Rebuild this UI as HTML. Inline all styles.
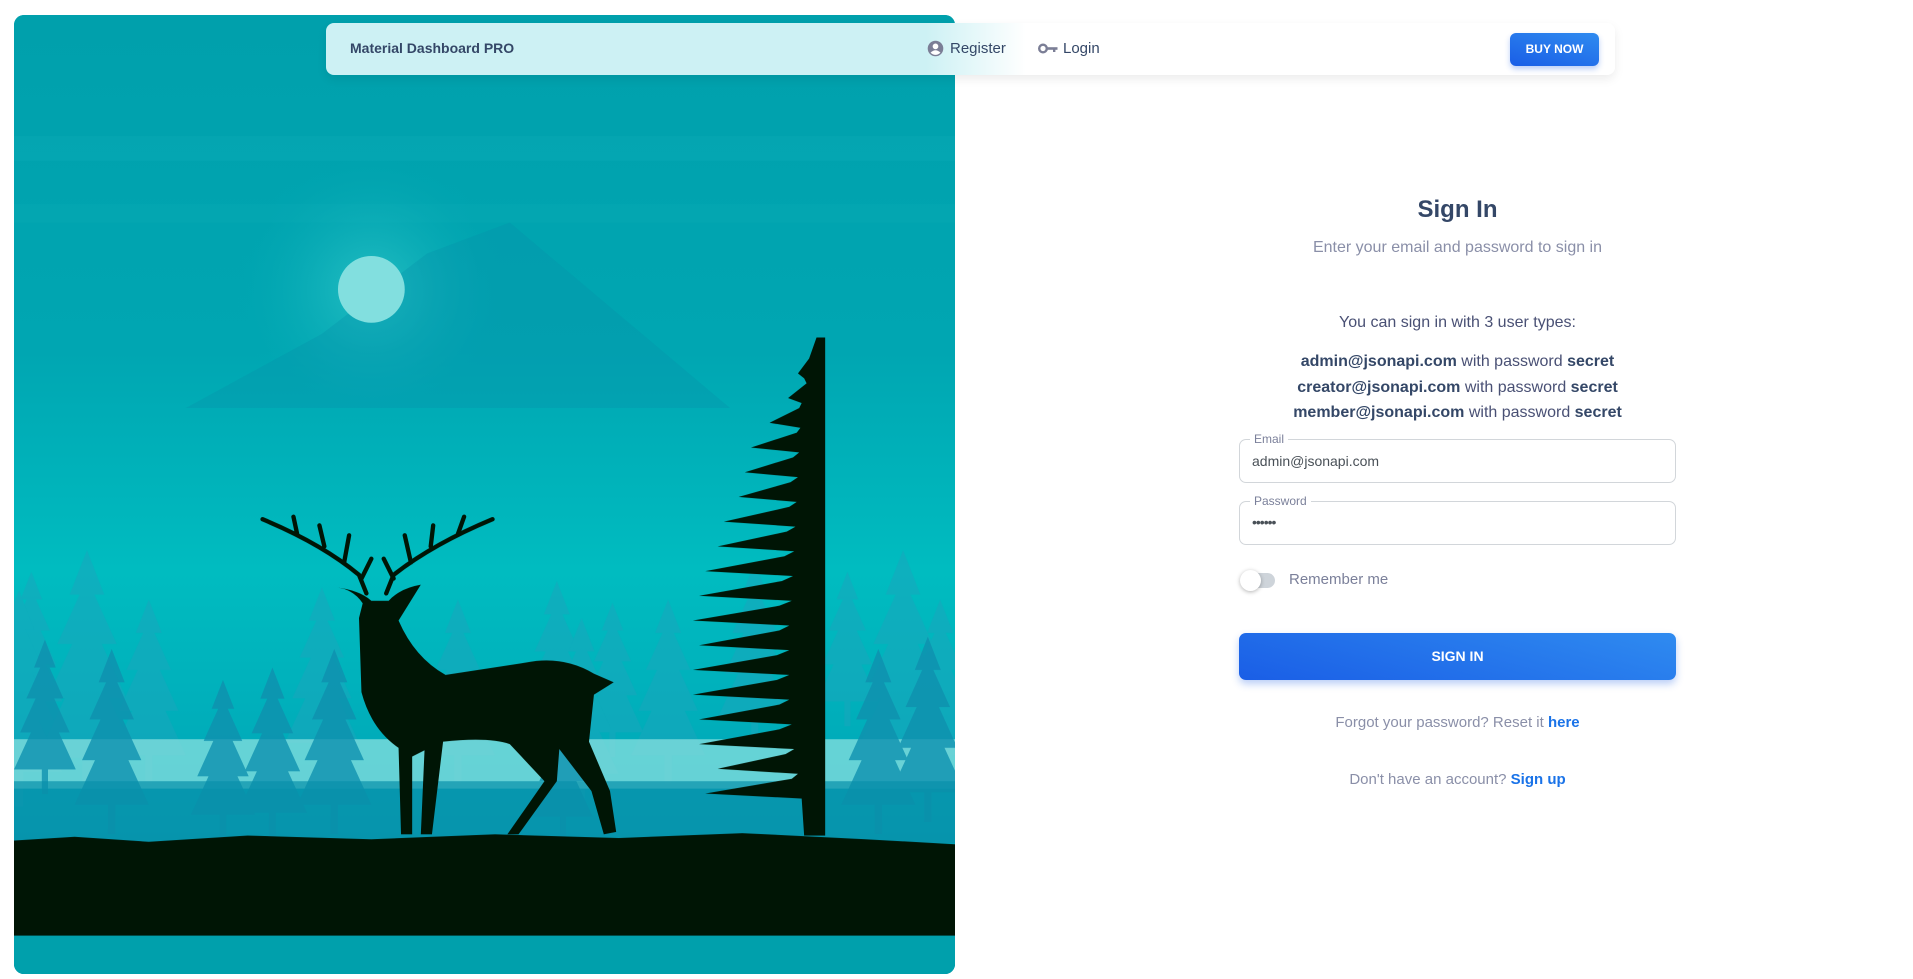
<!DOCTYPE html>
<html><head><meta charset="utf-8"><style>
*{margin:0;padding:0;box-sizing:border-box}
body{width:1913px;height:979px;background:#fff;font-family:"Liberation Sans",Roboto,sans-serif;position:relative;overflow:hidden;color:#344767}
.card{position:absolute;left:14px;top:15px;width:941px;height:959px;border-radius:10px;overflow:hidden;background:#00a0ac}
.nav{position:absolute;left:326px;top:23px;width:1289px;height:52px;border-radius:8px;background:linear-gradient(90deg,#cdf1f4 0,#cdf1f4 600px,#fff 700px);box-shadow:0 4px 10px rgba(0,0,0,.08)}
.t{position:absolute;white-space:nowrap}
.c{position:absolute;left:1239px;width:437px;text-align:center}
.inp{position:absolute;left:1239px;width:437px;height:44px;border:1px solid #d2d6da;border-radius:7px}
.lab{position:absolute;left:10px;top:-8px;background:#fff;padding:0 4px;font-size:12px;color:#7b809a}
</style></head><body>
<div class="card">
<svg width="941" height="959" viewBox="11 12 761 776" preserveAspectRatio="none" style="position:absolute;left:0;top:0">
<defs>
<linearGradient id="sky" x1="0" y1="0" x2="0" y2="1">
<stop offset="0" stop-color="#00a0ac"/><stop offset="0.35" stop-color="#00a6b2"/><stop offset="0.58" stop-color="#00bcc0"/><stop offset="0.8" stop-color="#00a8b8"/><stop offset="1" stop-color="#0088a8"/></linearGradient>
<radialGradient id="glow"><stop offset="0" stop-color="#3fd0d0" stop-opacity=".6"/><stop offset="1" stop-color="#00a8b4" stop-opacity="0"/></radialGradient>
<symbol id="pine" viewBox="0 0 40 100"><polygon points="20,0 27,18 23,18 32,38 26,38 36,60 29,60 40,84 22,84 22,100 18,100 18,84 0,84 11,60 4,60 14,38 8,38 17,18 13,18"/></symbol>
</defs>
<rect x="11" y="12" width="761" height="776" fill="url(#sky)"/>
<rect x="11" y="110" width="761" height="20" fill="#10b0ba" opacity=".25"/>
<rect x="11" y="165" width="761" height="15" fill="#10b0ba" opacity=".2"/>
<circle cx="300" cy="234" r="110" fill="url(#glow)"/>
<polygon points="412,180 590,330 150,330 260,270 345,205" fill="#0790a8" opacity=".3"/>
<circle cx="300" cy="234" r="27" fill="#82dfdf"/>
<g fill="#1aa6bc" opacity=".55">
<use href="#pine" x="0" y="370" width="50" height="310"/><use href="#pine" x="30" y="410" width="80" height="270"/><use href="#pine" x="-20" y="450" width="70" height="230"/>
<use href="#pine" x="420" y="410" width="60" height="270"/><use href="#pine" x="470" y="420" width="50" height="260"/><use href="#pine" x="510" y="440" width="60" height="240"/><use href="#pine" x="440" y="470" width="60" height="210"/>
<use href="#pine" x="660" y="370" width="50" height="310"/><use href="#pine" x="690" y="410" width="80" height="270"/><use href="#pine" x="730" y="440" width="60" height="240"/>
<use href="#pine" x="340" y="440" width="60" height="240"/><use href="#pine" x="580" y="380" width="60" height="300"/>
<use href="#pine" x="230" y="420" width="60" height="260"/><use href="#pine" x="90" y="440" width="60" height="240"/>
</g>
<rect x="11" y="598" width="761" height="40" fill="#90e4e2" opacity=".7"/>
<g fill="#1090ae" opacity=".8">
<use href="#pine" x="150" y="550" width="60" height="130"/><use href="#pine" x="190" y="540" width="60" height="140"/><use href="#pine" x="240" y="520" width="60" height="160"/>
<use href="#pine" x="11" y="480" width="50" height="200"/><use href="#pine" x="60" y="520" width="60" height="160"/><use href="#pine" x="420" y="560" width="70" height="120"/>
<use href="#pine" x="680" y="520" width="60" height="160"/><use href="#pine" x="720" y="500" width="60" height="180"/>
</g>
<rect x="11" y="632" width="761" height="50" fill="#0890aa" opacity=".7"/>
<path d="M11 680 L60 677 L120 681 L200 676 L300 679 L400 675 L500 678 L600 674 L700 679 L772 683 L772 757 L11 757 Z" fill="#001505"/>
<rect x="11" y="757" width="761" height="31" fill="#00a0ac"/>
<path d="M667 273 L660 273 L654 290 L645 302 L650 306 L652 310 L637 322 L648 326 L646 330 L622 342 L647 346 L644 350 L607 362 L646 366 L641 370 L602 382 L645 386 L639 390 L597 402 L644 406 L638 410 L585 422 L643 426 L636 430 L580 442 L642 446 L634 450 L570 462 L641 466 L632 470 L565 482 L640 486 L630 490 L560 502 L638 506 L630 510 L565 522 L638 526 L628 530 L560 542 L638 546 L628 550 L560 562 L638 566 L630 570 L565 582 L640 586 L630 590 L565 602 L642 606 L635 610 L580 622 L645 626 L640 630 L570 642 L648 646 L650 676 L667 676 Z" fill="#001505"/>
<g fill="#001505">
<path d="M270 475 Q285 476 293 488 L290 500 L292 560 Q300 590 322 605 L324 675 L333 675 L333 612 L343 607 L340 675 L349 675 L358 600 Q395 596 412 602 L440 632 L410 675 L419 675 L450 632 L452 606 L478 640 L488 675 L498 673 L493 640 L476 600 L480 562 L496 552 L480 545 Q455 530 425 536 L360 546 Q335 532 322 502 L340 473 Q323 476 314 486 L300 486 Q290 477 270 475 Z"/>
</g>
<g stroke="#001505" stroke-width="3.5" fill="none" stroke-linecap="round">
<path d="M296 480 L290 465 Q260 440 212 420 M262 442 L258 425 M278 455 L282 433 M240 432 L237 418 M292 468 L300 452"/>
<path d="M312 480 L318 465 Q350 440 398 420 M348 442 L350 425 M332 455 L327 433 M370 432 L375 418 M318 468 L310 452"/>
</g>
</svg>
</div>
<div class="nav">
<div class="t" style="left:24px;top:17px;font-size:14px;font-weight:bold;color:#344767">Material Dashboard PRO</div>
<svg style="position:absolute;left:601px;top:17px" width="17" height="17" viewBox="0 0 24 24"><circle cx="12" cy="12" r="11" fill="#7b7e96"/><circle cx="12" cy="9" r="4" fill="#fff"/><path d="M5 18 Q12 11 19 18 Q12 24 5 18Z" fill="#fff"/></svg>
<div class="t" style="left:624px;top:17px;font-size:15px;color:#344767">Register</div>
<svg style="position:absolute;left:712px;top:20px" width="20" height="11" viewBox="0 0 20 11"><circle cx="5" cy="5.5" r="3.8" fill="none" stroke="#7b7e96" stroke-width="2.4"/><rect x="8.5" y="4.2" width="11" height="2.6" fill="#7b7e96"/><rect x="15" y="5" width="2.4" height="4" fill="#7b7e96"/></svg>
<div class="t" style="left:737px;top:17px;font-size:15px;color:#344767">Login</div>
<div style="position:absolute;left:1184px;top:10px;width:89px;height:33px;border-radius:6px;background:linear-gradient(195deg,#2f8bf0,#1a5ee6);box-shadow:0 3px 6px rgba(26,94,230,.3);color:#fff;font-size:12px;font-weight:bold;text-align:center;line-height:33px">BUY NOW</div>
</div>
<div class="c" style="top:196px;font-size:24px;font-weight:bold;color:#344767">Sign In</div>
<div class="c" style="top:239px;font-size:16px;color:#8a8fa8">Enter your email and password to sign in</div>
<div class="c" style="top:314px;font-size:16px;color:#495074">You can sign in with 3 user types:</div>
<div class="c" style="top:349px;font-size:16px;line-height:25.5px;color:#495074"><b style="color:#344767">admin@jsonapi.com</b> with password <b style="color:#344767">secret</b><br><b style="color:#344767">creator@jsonapi.com</b> with password <b style="color:#344767">secret</b><br><b style="color:#344767">member@jsonapi.com</b> with password <b style="color:#344767">secret</b></div>
<div class="inp" style="top:439px"><span class="lab">Email</span><span class="t" style="left:12px;top:13px;font-size:14px;color:#495057">admin@jsonapi.com</span></div>
<div class="inp" style="top:501px"><span class="lab">Password</span><span class="t" style="left:12px;top:12px;font-size:14px;color:#495057;letter-spacing:-1px">••••••</span></div>
<div style="position:absolute;left:1241px;top:573px;width:34px;height:15px;border-radius:8px;background:#ced4da"></div>
<div style="position:absolute;left:1240px;top:570px;width:21px;height:21px;border-radius:50%;background:#fff;box-shadow:0 1px 4px rgba(0,0,0,.3)"></div>
<div class="t" style="left:1289px;top:571px;font-size:15px;color:#7b809a">Remember me</div>
<div style="position:absolute;left:1239px;top:633px;width:437px;height:47px;border-radius:7px;background:linear-gradient(195deg,#2f8bf0,#1a5ee6);box-shadow:0 4px 8px rgba(26,94,230,.3);color:#fff;font-size:14px;font-weight:bold;text-align:center;line-height:47px">SIGN IN</div>
<div class="c" style="top:714px;font-size:15px;color:#8a8fa8">Forgot your password? Reset it <b style="color:#1a73e8">here</b></div>
<div class="c" style="top:771px;font-size:15px;color:#8a8fa8">Don't have an account? <b style="color:#1a73e8">Sign up</b></div>
</body></html>
